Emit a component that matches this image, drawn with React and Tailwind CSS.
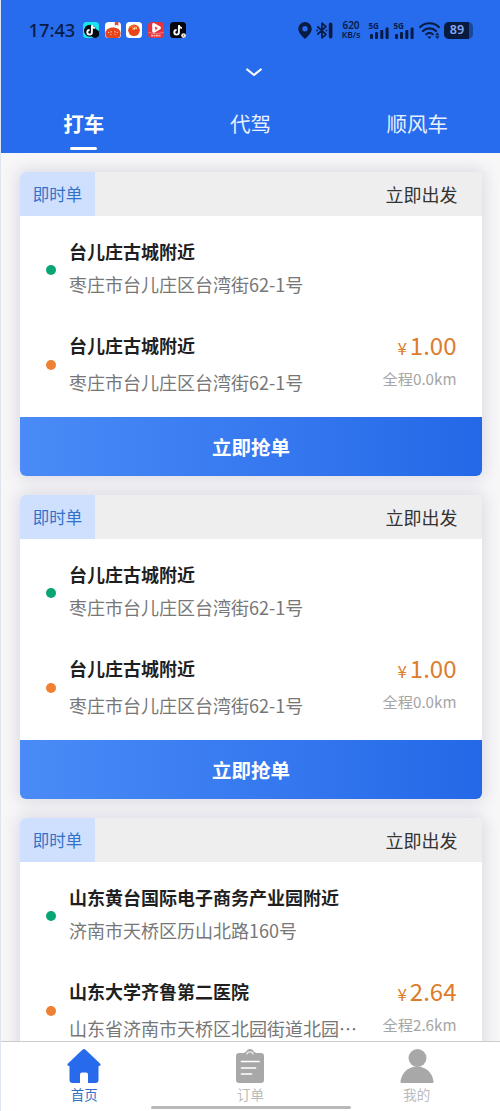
import React, { useState } from 'react';

const orders = [
  {
    id: 1,
    from: { title: '台儿庄古城附近', address: '枣庄市台儿庄区台湾街62-1号' },
    to: { title: '台儿庄古城附近', address: '枣庄市台儿庄区台湾街62-1号' },
    price: '1.00',
    distance: '0.0',
  },
  {
    id: 2,
    from: { title: '台儿庄古城附近', address: '枣庄市台儿庄区台湾街62-1号' },
    to: { title: '台儿庄古城附近', address: '枣庄市台儿庄区台湾街62-1号' },
    price: '1.00',
    distance: '0.0',
  },
  {
    id: 3,
    from: { title: '山东黄台国际电子商务产业园附近', address: '济南市天桥区历山北路160号' },
    to: { title: '山东大学齐鲁第二医院', address: '山东省济南市天桥区北园街道北园…' },
    price: '2.64',
    distance: '2.6',
  },
];

const NOTE = 'M8.9 3.2v7.1a2.3 2.3 0 1 1-2.3-2.3M8.9 3.2c.2 1.8 1.3 2.7 3 2.9';

// Small app icons next to the clock
function AppIcons() {
  return (
    <div className="flex gap-[5.7px]">
      <svg className="size-4" viewBox="0 0 16 16" fill="none">
        <rect width="16" height="16" rx="3.5" fill="#19e5ea" />
        <circle cx="7" cy="8.8" r="6" fill="#050b14" />
        <circle cx="12" cy="11.6" r="4.4" fill="#050b14" />
        <path d={NOTE} stroke="#fff" strokeWidth="1.9" />
      </svg>
      <svg className="size-4" viewBox="0 0 16 16" fill="none">
        <rect width="16" height="16" rx="3.5" fill="#fff" />
        <path d="M9.8 0h3.6v3.8l-1.8-1-1.8 1z" fill="#e64a3c" />
        <path d="M.4 11.5C.4 7.8 3.6 5.6 8 5.6s7.6 2.2 7.6 5.9c0 3-1.4 4.5-3.6 4.5H4C1.8 16 .4 14.5.4 11.5z" fill="#e8441c" />
        <path d="M3.2 10.8l1-.5M6 9.2l.3 1.2M10 9.2l-.3 1.2M12.8 10.8l-1-.5M5.5 12.6l.8-.3M10.5 12.6l-.8-.3" stroke="#ffd9b8" strokeWidth="1.1" />
      </svg>
      <svg className="size-4" viewBox="0 0 16 16" fill="none">
        <rect width="16" height="16" rx="3.5" fill="#fff" />
        <circle cx="8" cy="8.3" r="5.8" fill="#e9441a" />
        <path d="M3 6C4.5 3.5 7 2.5 9 3 7 4 5 5.500 3 6z" fill="#f58a24" />
        <path d="M6.500 5l2 2.500M9 4.600l-.5 3M6.400 7.200l4.400-1.200M10 4.600l.8 2.600" stroke="#ffe6a0" strokeWidth=".8" />
      </svg>
      <svg className="size-4" viewBox="0 0 16 16" fill="none">
        <rect width="16" height="16" rx="3.5" fill="#e5333f" />
        <path d="M4.2 2.5c0-1.5 1-1.9 2.300-1.200l5.600 3.300c1.300.8 1.300 1.900 0 2.700L6.800 10.400c-1.500.8-2.600.3-2.600-1.300z" fill="#fff" />
        <path d="M6.600 4.600l3 1.500-1.800 2.400z" fill="#e5333f" />
        <path d="M.3 10.300c4 1.700 11 1.700 15.400 0" stroke="#f6a09b" strokeWidth=".7" />
        <path d="M3 13.600h10" stroke="#ffb7a8" strokeWidth="1.8" strokeDasharray="2 .5" />
      </svg>
      <svg className="size-4" viewBox="0 0 16 16" fill="none">
        <rect width="16" height="16" rx="3.5" fill="#04060c" />
        <path d={NOTE} stroke="#fff" strokeWidth="1.9" />
        <circle cx="13.600" cy="13.600" r="2.400" fill="#f4ecdf" />
        <path d="M13 12.500l1.500 1-1.500 1.200z" fill="#c9572f" />
      </svg>
    </div>
  );
}

function Signal() {
  return (
    <div className="relative h-[17px] w-5">
      <span className="absolute -left-[0.5px] -top-px text-[8px] leading-[9px] font-bold">5G</span>
      <svg className="size-full" viewBox="0 0 20 17" fill="currentColor">
        <rect x="1" y="12" width="3" height="5" rx="1" />
        <rect x="6" y="10" width="3" height="7" rx="1" />
        <rect x="11.3" y="8" width="3" height="9" rx="1" />
        <rect x="16.6" y="5.5" width="3" height="11.5" rx="1" />
      </svg>
    </div>
  );
}

function StatusBar() {
  return (
    <div className="flex h-[60px] items-center justify-between pl-[27.5px] pr-[27.5px] text-[#081b45] font-['Noto_Sans',sans-serif]">
      <div className="flex items-center gap-[7px]">
        <span className="w-[47.5px] text-[18.3px] leading-6 font-medium">17:43</span>
        <AppIcons />
      </div>
      <div className="flex items-center">
        <svg className="h-[17px] w-[14px]" viewBox="0 0 14 17" fill="currentColor">
          <path fillRule="evenodd" d="M7 0a6.700 6.700 0 0 1 6.700 6.700C13.700 11 9.500 14.500 7 17 4.500 14.500.3 11 .3 6.700A6.700 6.700 0 0 1 7 0zm0 4a2.700 2.700 0 1 0 0 5.400A2.700 2.700 0 0 0 7 4z" />
        </svg>
        <svg className="ml-1 h-[17px] w-[17px]" viewBox="0 0 17 17" fill="none" stroke="currentColor" strokeWidth="1.7">
          <path d="M1.300 4.500l8.700 7.800-4 3.500V1.200l4 3.500-8.700 7.800" strokeLinejoin="round" />
          <path d="M.2 8.500h1.800M9.700 8.500h1.600" />
          <rect x="12.8" y=".5" width="3.6" height="16" rx="1.8" fill="currentColor" stroke="none" />
        </svg>
        <div className="ml-[7px] flex w-[22px] flex-col items-center font-semibold">
          <span className="text-[10px] leading-[9.5px]">620</span>
          <span className="text-[8.5px] leading-[9px] whitespace-nowrap">KB/s</span>
        </div>
        <div className="ml-[7px] flex gap-[5px]">
          <Signal />
          <Signal />
        </div>
        <svg className="ml-[4.5px] h-[17px] w-[21px]" viewBox="0 0 21 17" fill="none" stroke="currentColor" strokeWidth="2.2" strokeLinecap="round">
          <path d="M1.200 5c5-5 13.600-5 18.600 0M4 9c3.500-3.500 9.500-3.500 13 0M7.300 12.300c1.700-1.500 4.700-1.500 6.400 0" />
          <path d="M8.300 14.500h4.200L10.400 17z" fill="currentColor" stroke="none" />
          <path d="M16.200 13.300l2.100-2.800 2.100 2.800zM16.200 14.300l2.100 2.700 2.100-2.700z" fill="currentColor" stroke="none" />
        </svg>
        <div className="ml-1 flex h-[17px] w-[29px] overflow-hidden rounded-[5px] bg-[#17479f]">
          <span className="flex w-[25px] items-center justify-center bg-[#081a3e] pl-[2px] text-[12.5px] font-semibold text-[#86a9f5]">89</span>
        </div>
      </div>
    </div>
  );
}

function Place({ place, dot, gap }) {
  return (
    <div className="flex items-center">
      <span className={`ml-[26px] mr-[13px] size-[10px] shrink-0 rounded-full ${dot}`} />
      <div className={`flex flex-col ${gap}`}>
        <h3 className="text-[18px] leading-[27px] font-bold whitespace-nowrap text-[#1f1f1f]">{place.title}</h3>
        <p className="text-[18px] leading-[27px] whitespace-nowrap text-[#777]">{place.address}</p>
      </div>
    </div>
  );
}

function OrderCard({ order }) {
  return (
    <div className="w-[462px] shrink-0 overflow-hidden rounded-[6px] bg-white shadow-[0_0_16px_2px_rgba(90,90,140,0.2)]">
      <div className="flex h-11 items-center justify-between bg-[#eee] pr-[24.5px]">
        <span className="flex h-full w-[75px] items-center justify-center bg-[#cfe0ff] text-[16.5px] text-[#3172c8]">即时单</span>
        <span className="text-[18px] text-[#333]">立即出发</span>
      </div>
      <div className="h-[201px] pt-[22px]">
        <Place place={order.from} dot="mt-[4px] bg-[#09a575]" gap="gap-[6px]" />
        <div className="mt-[34px] flex items-start justify-between pr-[25.5px]">
          <Place place={order.to} dot="mt-px bg-[#ee8133]" gap="gap-[10px]" />
          <div className="-mt-px shrink-0 text-right">
            <p className="text-[24px] leading-[27px] text-[#dc7c2c]">
              <span className="mr-[3px] text-[17px]">¥</span>
              {order.price}
            </p>
            <p className="mt-[4px] text-[15.2px] leading-[26px] text-[#a5a5a5]">全程{order.distance}km</p>
          </div>
        </div>
      </div>
      <button className="block h-[58.5px] w-full bg-linear-to-r from-[#4a8bf7] to-[#2468e8] text-[19.5px] font-bold text-white">
        立即抢单
      </button>
    </div>
  );
}

function HomeIcon() {
  return (
    <svg className="h-[34px] w-[34px]" viewBox="0 0 34 34" fill="#276aeb">
      <path d="M15.400.7Q17-.6 18.600.7L33 14.500q1.700 2.500-1.500 2.500v14q0 3-3 3H21v-8.500q0-2-2-2h-4q-2 0-2 2V34H5.500q-3 0-3-3V17Q-.7 17 1 14.500z" />
    </svg>
  );
}

function OrderIcon() {
  return (
    <svg className="h-[34px] w-[28px]" viewBox="0 0 28 34" fill="#a8a8a8">
      <rect y="4" width="28" height="30" rx="3" />
      <path d="M8 6.500V4.500q0-1.500 1.500-1.500H10Q11 0 14 0t4 3h.5Q20 3 20 4.500v2z" />
      <path d="M11 5q0-2.200 3-2.200T17 5" fill="none" stroke="#e8e8e8" strokeWidth="1.300" strokeLinecap="round" />
      <path d="M5.500 12.500h17.500M5.500 19h14M5.500 25h10" stroke="#fff" strokeWidth="1.700" strokeLinecap="round" />
    </svg>
  );
}

function UserIcon() {
  return (
    <svg className="h-[34px] w-[34px]" viewBox="0 0 34 34" fill="#a8a8a8">
      <circle cx="17.500" cy="9" r="9" />
      <path d="M1.500 34Q.5 34 .5 32.500C1.500 24 8 17.500 17 17.500S32.500 24 33.500 32.500Q33.500 34 32.500 34z" />
    </svg>
  );
}

const tabs = ['打车', '代驾', '顺风车'];
const navItems = [
  { label: '首页', Icon: HomeIcon },
  { label: '订单', Icon: OrderIcon },
  { label: '我的', Icon: UserIcon },
];

export default function App() {
  const [tab, setTab] = useState(0);
  const [nav, setNav] = useState(0);

  return (
    <div className="flex h-screen w-[500px] flex-col overflow-hidden border-l border-[#dfe6ee] bg-[#f7f7f8] font-['Noto_Sans_CJK_SC',sans-serif]">
      <header className="flex h-[153px] shrink-0 flex-col bg-[#276cec]">
        <StatusBar />
        <div className="flex h-6 items-center justify-center pl-[6px]">
          <svg className="h-[9px] w-4" viewBox="0 0 16 9" fill="none" stroke="#fff" strokeWidth="2.2" strokeLinecap="round" strokeLinejoin="round">
            <path d="M1.200 1.500L8 7l6.800-5.500" />
          </svg>
        </div>
        <div className="flex flex-1 pt-[24px]">
          {tabs.map((name, i) => (
            <button
              key={name}
              onClick={() => setTab(i)}
              className={`flex flex-1 flex-col items-center text-[20.5px] leading-[30px] ${tab === i ? 'font-bold text-white' : 'pl-px text-[#e9f1ff]'}`}
            >
              {name}
              {tab === i && <span className="mt-[9px] h-[3px] w-[27px] rounded-full bg-white" />}
            </button>
          ))}
        </div>
      </header>

      <main className="flex min-h-0 flex-1 flex-col gap-[19.5px] overflow-hidden pl-[19px] pt-[19px]">
        {orders.map((order) => (
          <OrderCard key={order.id} order={order} />
        ))}
      </main>

      <nav className="relative flex h-[70px] shrink-0 border-t border-[#ccc] bg-white pt-[7px]">
        {navItems.map(({ label, Icon }, i) => (
          <button
            key={label}
            onClick={() => setNav(i)}
            className={`flex flex-1 flex-col items-center gap-[3px] text-[13.5px] leading-[16px] ${nav === i ? 'text-[#3172c8]' : 'text-[#bbb]'}`}
          >
            <Icon />
            {label}
          </button>
        ))}
        {/* Home indicator */}
        <span className="absolute bottom-[2px] left-[150px] h-[3px] w-[200px] rounded-full bg-[#b9b9b9]" />
      </nav>
    </div>
  );
}
